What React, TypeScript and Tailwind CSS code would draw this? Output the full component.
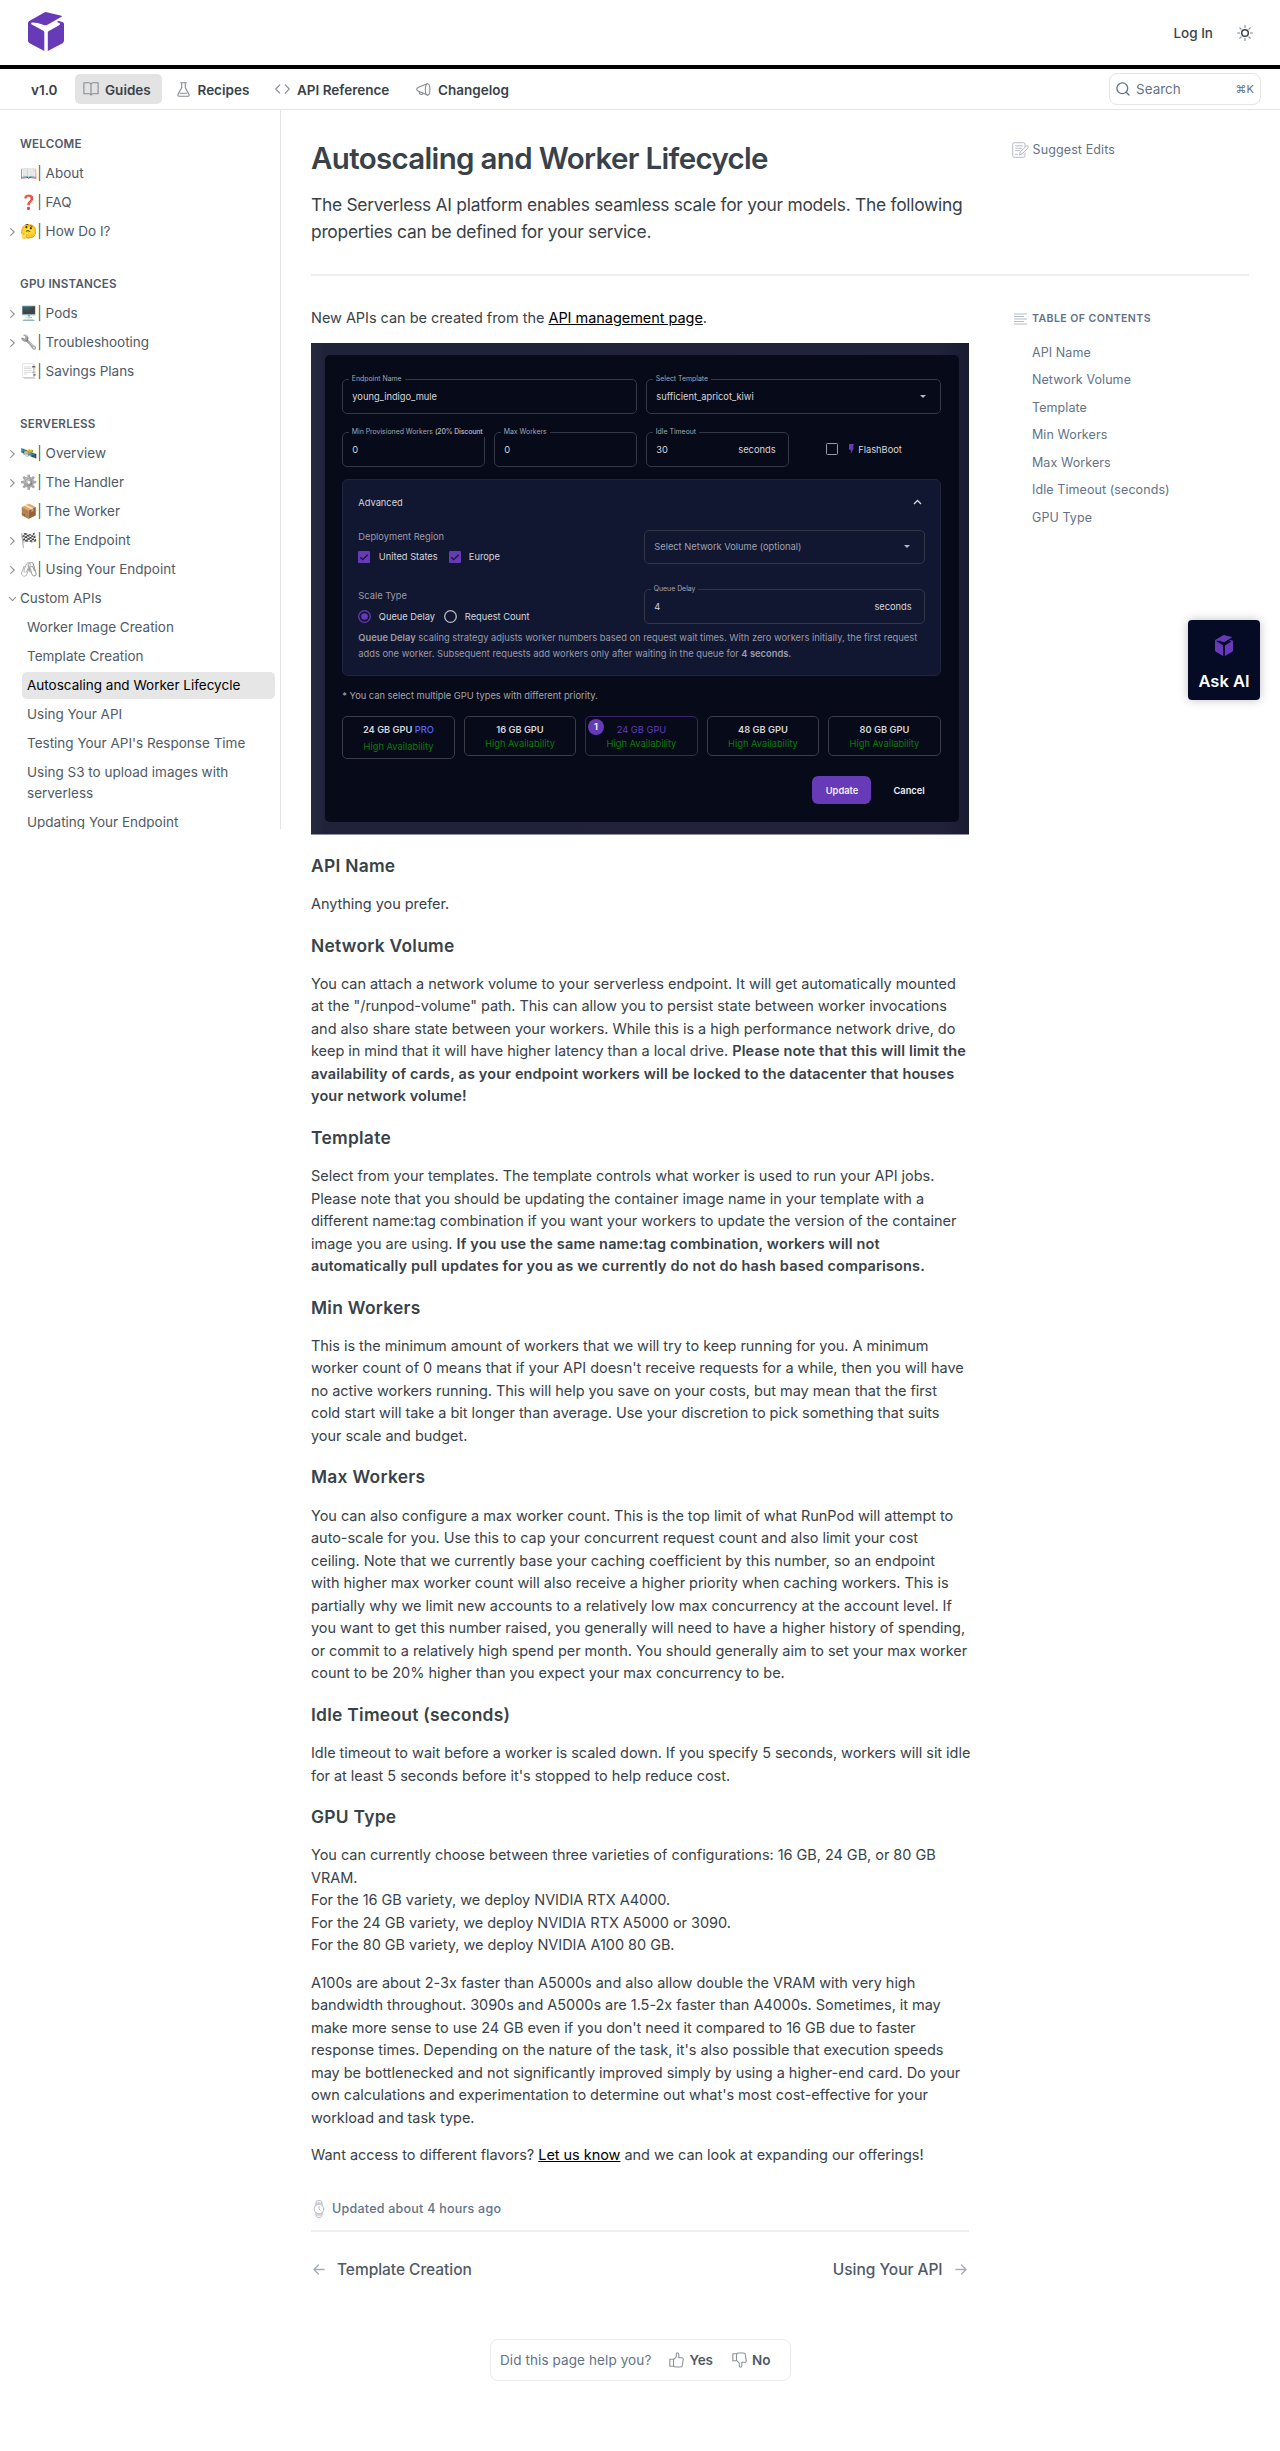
import React from "react";

function Cube({ className }: { className: string }) {
  return (
    <svg className={className} viewBox="0 0 36 39" fill="#673AB7" preserveAspectRatio="none">
      <path d="M17.6 .1 33.500 3.700Q34.500 4.200 33.600 4.800L19 13Q18 13.600 16.800 13.200L9.500 10.900 4 10.500Q2.500 10.800 3.400 12.200L15.400 18.800Q16.300 19.400 16.300 20.600V39L1.600 31.200Q0 30.400 0 28.600V11Q0 9.600 1.200 8.900L16.400.5Q17 0 17.600.1Z" />
      <path d="M29.300 9.500Q30 8.800 31 9.100L35 10.300Q36 10.800 36 12.200V28.600Q36 30.400 34.600 31.200L19.800 39V20.600Q19.800 19.500 20.800 18.900L31.200 13.200Q33 12 31.500 11L29.800 10.500Q29 10 29.300 9.500Z" />
    </svg>
  );
}

type IconProps = { className: string };
const stroke = { fill: "none", stroke: "currentColor", strokeLinecap: "round" as const, strokeLinejoin: "round" as const };

const BookIcon = ({ className }: IconProps) => (
  <svg className={className} viewBox="0 0 16 14" {...stroke} strokeWidth="1.1">
    <path d="M8 2.2Q7.4.8 5.8.8H.9v11H6Q7.6 11.8 8 13.2Q8.4 11.8 10 11.8h5.100V.8H10.200Q8.600.8 8 2.200V13" />
  </svg>
);
const FlaskIcon = ({ className }: IconProps) => (
  <svg className={className} viewBox="0 0 13 15" {...stroke} strokeWidth="1.1">
    <path d="M3.600.8h5.800M4.700.8v5L1 12.300Q.4 14.200 2.200 14.200h8.600Q12.600 14.200 12 12.300L8.300 5.800v-5M3.200 11.300h6.600" />
  </svg>
);
const CodeIcon = ({ className }: IconProps) => (
  <svg className={className} viewBox="0 0 15 10" {...stroke} strokeWidth="1.1">
    <path d="M4.800.8.8 5l4 4.200M10.200.8l4 4.200-4 4.200" />
  </svg>
);
const MegaphoneIcon = ({ className }: IconProps) => (
  <svg className={className} viewBox="0 0 15 13" {...stroke} strokeWidth="1.100">
    <path d="M11.300.8 2 4.600Q.6 5.200.7 6.300.7 7.300 2 7.900l9.300 4.200M3.300 8.500v1.400q.3 1.500 2 1.600l1.700-.6" />
    <ellipse cx="11.600" cy="6.500" rx="2.300" ry="5.700" />
  </svg>
);
const SunIcon = ({ className }: IconProps) => (
  <svg className={className} viewBox="0 0 16 16" {...stroke}>
    <circle cx="8" cy="8" r="3.300" strokeWidth="1.500" />
    <path strokeWidth="1.100" opacity=".65" d="M8 .6v2M8 13.400v2M.6 8h2M13.400 8h2M2.800 2.800l1.300 1.300M11.900 11.900l1.300 1.300M2.800 13.200l1.300-1.300M11.900 4.100l1.300-1.300" />
  </svg>
);
const SearchIcon = ({ className }: IconProps) => (
  <svg className={className} viewBox="0 0 14 14" {...stroke} strokeWidth="1.300">
    <circle cx="6.300" cy="6.300" r="5.400" />
    <path d="m10.200 10.200 2.800 2.800" />
  </svg>
);
const Chevron = ({ className }: IconProps) => (
  <svg className={className} viewBox="0 0 5 8" {...stroke} strokeWidth="1.100">
    <path d="m.7.7 3.500 3.300L.7 7.300" />
  </svg>
);
const EditIcon = ({ className }: IconProps) => (
  <svg className={className} viewBox="0 0 17 16" {...stroke} strokeWidth="1">
    <path d="M13 4.500V2.200Q13 .7 11.500.7H2.200Q.7.7.7 2.200v11.600Q.7 15.300 2.200 15.300h9.300q1.500 0 1.500-1.500V11M3.500 3.800h7M3.500 6.200h6M3.500 8.600h4M3.500 12.300h2M7.500 12.600l.8-2.800 5.900-5.600q1-.7 1.800.1t0 1.800l-5.900 5.600z" />
  </svg>
);
const TocIcon = ({ className }: IconProps) => (
  <svg className={className} viewBox="0 0 13 12" {...stroke} strokeWidth="1">
    <path d="M.5 1h12M.5 3.500h9M.5 6h12M.5 8.500h9M.5 11h12" />
  </svg>
);
const WatchIcon = ({ className }: IconProps) => (
  <svg className={className} viewBox="0 0 12 18" {...stroke} strokeWidth="1">
    <circle cx="6" cy="9" r="4.800" />
    <path d="M2.800 5.200 3.300 1.600Q3.500.7 4.400.7h3.200q.9 0 1.100.9l.5 3.600M2.800 12.800l.5 3.600q.2.900 1.100.9h3.200q.9 0 1.100-.9l.5-3.600M3.300 3h5.400M3.300 15h5.400M6 6.500V9l1.300 1.300" />
  </svg>
);
const ArrowIcon = ({ className }: IconProps) => (
  <svg className={className} viewBox="0 0 12 11" {...stroke} strokeWidth="1.300">
    <path d="M.9 5.500h10M6.600 1l4.500 4.500L6.600 10" />
  </svg>
);
const ThumbIcon = ({ className }: IconProps) => (
  <svg className={className} viewBox="0 0 15 16" {...stroke} strokeWidth="1.100">
    <path d="M4.500 7.200v7H.8v-7zM4.500 7.600 7.300 4.800V2Q7.400.7 8.300.7q1.500 0 1.500 2.100v3h2.900q1.600 0 1.500 1.500l-.8 6q-.2 1.700-1.800 1.700H7Q5.600 15 4.500 13.800" />
  </svg>
);

const nav = [
  { label: "Guides", Icon: BookIcon, icon: "h-[14px] w-4", box: "ml-[17px] w-[87px] pl-2 bg-[#e3e3e3]", gap: "ml-[6px]" },
  { label: "Recipes", Icon: FlaskIcon, icon: "h-[15px] w-[13px]", box: "w-[98px] pl-[15px]", gap: "ml-[7.500px]" },
  { label: "API Reference", Icon: CodeIcon, icon: "h-[10px] w-[15px]", box: "w-[141px] pl-[15px]", gap: "ml-[7px]" },
  { label: "Changelog", Icon: MegaphoneIcon, icon: "h-[13px] w-[15px]", box: "w-[120px] pl-[15px]", gap: "ml-[7px]" },
];

function Header() {
  return (
    <header>
      <div className="flex h-[65px] items-center justify-between pl-[28px] pr-[27px]">
        <Cube className="mb-[3px] h-[39px] w-[36px]" />
        <div className="flex items-center">
          <span className="pt-px text-[13.500px] font-medium">Log In</span>
          <SunIcon className="ml-[24px] size-4" />
        </div>
      </div>
      <div className="h-1 bg-black" />
      <nav className="flex h-[41px] items-center border-b border-[#e3e4e6] pl-[31px] pr-[19px] text-[13.500px] font-semibold">
        <span className="w-[27px] pt-[2px]">v1.0</span>
        {nav.map(({ label, Icon, icon, box, gap }) => (
          <div key={label} className={`flex h-[30px] items-center whitespace-nowrap rounded-[5px] ${box}`}>
            <Icon className={`shrink-0 text-[#858b91] ${icon}`} />
            <span className={`pt-[2px] ${gap}`}>{label}</span>
          </div>
        ))}
        <div className="ml-auto flex h-8 w-[152px] items-center rounded-lg border border-[#e4e5e7] pl-[6px] pr-[6px] text-[#637288]">
          <SearchIcon className="size-[14px]" />
          <span className="ml-[6px] font-normal">Search</span>
          <span className="ml-auto text-[11px] font-normal">⌘K</span>
        </div>
      </nav>
    </header>
  );
}

type Item = { emoji?: string; label: string; arrow?: boolean; gray?: boolean };
const sections: { title: string; items: Item[] }[] = [
  {
    title: "WELCOME",
    items: [
      { emoji: "📖", label: "About" },
      { emoji: "❓", label: "FAQ" },
      { emoji: "🤔", label: "How Do I?", arrow: true },
    ],
  },
  {
    title: "GPU INSTANCES",
    items: [
      { emoji: "🖥️", label: "Pods", arrow: true },
      { emoji: "🔧", label: "Troubleshooting", arrow: true, gray: true },
      { emoji: "📑", label: "Savings Plans", gray: true },
    ],
  },
  {
    title: "SERVERLESS",
    items: [
      { emoji: "🛰️", label: "Overview", arrow: true },
      { emoji: "⚙️", label: "The Handler", arrow: true, gray: true },
      { emoji: "📦", label: "The Worker" },
      { emoji: "🏁", label: "The Endpoint", arrow: true },
      { emoji: "🖇️", label: "Using Your Endpoint", arrow: true, gray: true },
    ],
  },
];
const custom = [
  "Worker Image Creation",
  "Template Creation",
  "Autoscaling and Worker Lifecycle",
  "Using Your API",
  "Testing Your API's Response Time",
  "Using S3 to upload images with serverless",
  "Updating Your Endpoint",
];

function Sidebar() {
  return (
    <aside className="h-[719px] w-[281px] shrink-0 overflow-hidden border-r border-[#e3e4e6] pt-[25px] text-[13.500px] leading-[21px] text-[#4f5a66]">
      {sections.map((s) => (
        <section key={s.title} className="mb-[29px] last-of-type:mb-0">
          <h2 className="mb-[6px] pl-[20px] text-[11.600px] font-semibold leading-[18px] tracking-[0.200px]">{s.title}</h2>
          {s.items.map((i) => (
            <div key={i.label} className="flex h-[29px] items-center">
              <span className="flex w-[20px] justify-end pr-[5px]">
                {i.arrow && <Chevron className="h-2 w-[5px] text-[#8b929a]" />}
              </span>
              <span className={`flex w-[17.300px] justify-center font-['Noto_Color_Emoji'] text-[14px] ${i.gray ? "grayscale" : ""}`}>{i.emoji}</span>
              <span className="whitespace-pre">| {i.label}</span>
            </div>
          ))}
        </section>
      ))}
      <div className="flex h-[29px] items-center">
        <span className="flex w-[20px] justify-end pr-[5px]">
          <Chevron className="h-2 w-[5px] rotate-90 text-[#8b929a]" />
        </span>
        Custom APIs
      </div>
      <div className="-mt-px ml-[21.500px] mr-[5px]">
        {custom.map((c) => (
          <div
            key={c}
            className={`my-[2px] rounded-[5px] py-[3px] pl-[5.500px] pr-6 ${c.startsWith("Auto") ? "bg-[#e6e6e6] text-black" : ""}`}
          >
            {c}
          </div>
        ))}
      </div>
    </aside>
  );
}

function Field({ label, value, className, suffix, select }: { label?: React.ReactNode; value: string; className: string; suffix?: string; select?: boolean }) {
  return (
    <div className={`relative flex h-[34.500px] items-center justify-between rounded-[5px] border border-[#343748] pl-[9px] pr-[12px] ${className}`}>
      {label && <span className="absolute -top-[6px] left-[5.500px] whitespace-nowrap bg-inherit px-[3px] text-[6.900px] leading-[10px] text-[#a5a6ae]">{label}</span>}
      <span>{value}</span>
      {suffix && <span>{suffix}</span>}
      {select && <span className="mr-[2px] border-x-[3.500px] border-t-[3.500px] border-x-transparent border-t-[#b9bac1]" />}
    </div>
  );
}

const Check = () => (
  <svg className="size-3" viewBox="0 0 12 12">
    <rect width="12" height="12" rx="1.300" fill="#673AB7" />
    <path d="m2.200 6.200 2.500 2.500 5-5" fill="none" stroke="#111631" strokeWidth="1.300" />
  </svg>
);
const Radio = ({ on }: { on?: boolean }) => (
  <svg className={`size-[13px] ${on ? "text-[#673AB7]" : "text-[#b9bac1]"}`} viewBox="0 0 13 13">
    <circle cx="6.500" cy="6.500" r="5.800" fill="none" stroke="currentColor" strokeWidth="1.300" />
    {on && <circle cx="6.500" cy="6.500" r="3.300" fill="currentColor" />}
  </svg>
);

const gpus = ["24 GB GPU", "16 GB GPU", "24 GB GPU", "48 GB GPU", "80 GB GPU"];

function EndpointForm() {
  return (
    <div className="flex h-[492px] w-[658px] flex-col border-b border-[#8e8f99] bg-[linear-gradient(90deg,#262b3e_0,#20223a_14px,#22233a_95%,#191b33_100%)] pb-[12px] pl-[14px] pr-[10.400px] pt-[12px] text-[9.300px] leading-[13px] tracking-normal text-[#d6d7dc]">
      <div className="flex flex-1 flex-col rounded-[5px] bg-[#070a18] pl-[17.300px] pr-[17.900px] pt-[24px]">
        <div className="flex gap-[9.700px]">
          <Field className="w-[294.300px] bg-[#070a18]" label="Endpoint Name" value="young_indigo_mule" />
          <Field className="w-[294.300px] bg-[#070a18]" label="Select Template" value="sufficient_apricot_kiwi" select />
        </div>
        <div className="mt-[18.500px] flex gap-[9.700px]">
          <Field className="w-[142.300px] bg-[#070a18]" label={<>Min Provisioned Workers <b className="font-semibold tracking-[-0.150px]">(20% Discount</b></>} value="0" />
          <Field className="w-[142.300px] bg-[#070a18]" label="Max Workers" value="0" />
          <Field className="w-[142.300px] bg-[#070a18]" label="Idle Timeout" value="30" suffix="seconds" />
          <div className="ml-[28px] flex items-center">
            <span className="size-3 rounded-[1.500px] border-[1.500px] border-[#9b9ca5]" />
            <svg className="ml-[11px] h-[10px] w-[5px]" viewBox="0 0 5 10" fill="#673AB7"><path d="M0 0h5L3.800 3.500H5L1.800 10V5.800H0z" /></svg>
            <span className="ml-[4px]">FlashBoot</span>
          </div>
        </div>
        <div className="mt-[12px] h-[197px] rounded-[6px] border border-[#20253f] bg-[#111631] pl-[15px] pr-[15px] pt-[16px]">
          <div className="flex items-center justify-between pr-[3px]">
            <span>Advanced</span>
            <svg className="h-[6px] w-[9px]" viewBox="0 0 9 6" fill="none" stroke="#d6d7dc" strokeWidth="1.300"><path d="m1 5 3.500-3.500L8 5" /></svg>
          </div>
          <div className="mt-[21px] flex">
            <div className="w-[286px]">
              <div className="text-[#9a9ca8]">Deployment Region</div>
              <div className="mt-[7.500px] flex items-center">
                <Check /><span className="ml-[8.500px] w-[70px]">United States</span>
                <Check /><span className="ml-[8px]">Europe</span>
              </div>
              <div className="mt-[25.500px] text-[#9a9ca8]">Scale Type</div>
              <div className="mt-[8px] flex items-center">
                <Radio on /><span className="ml-[7.500px] w-[65.500px]">Queue Delay</span>
                <Radio /><span className="ml-[7.500px]">Request Count</span>
              </div>
            </div>
            <div className="w-[280.500px]">
              <Field className="bg-[#111631] text-[#a0a2ad]" value="Select Network Volume (optional)" select />
              <Field className="mt-[25px] bg-[#111631]" label="Queue Delay" value="4" suffix="seconds" />
            </div>
          </div>
          <p className="mt-[6px] whitespace-nowrap text-[9.330px] leading-[16.300px] text-[#9a9ca8]">
            <b className="font-semibold">Queue Delay</b> scaling strategy adjusts worker numbers based on request wait times. With zero workers initially, the first request
            <br />
            adds one worker. Subsequent requests add workers only after waiting in the queue for <b className="font-semibold">4 seconds.</b>
          </p>
        </div>
        <p className="mt-[13.500px] text-[#a5a6ae]">* You can select multiple GPU types with different priority.</p>
        <div className="mt-[13.500px] flex items-start gap-[9.100px]">
          {gpus.map((g, i) => (
            <div
              key={i}
              className={`relative flex w-[112.400px] flex-col items-center rounded-[5px] border pt-[6px] ${i === 0 ? "h-[43px]" : "h-[40.500px]"} ${i === 2 ? "border-[#3a2568] text-[#673AB7]" : "border-[#3c3d48]"}`}
            >
              {i === 2 && (
                <span className="absolute left-[2px] top-[2.500px] flex size-[15.500px] items-center justify-center rounded-full bg-[#673AB7] font-semibold text-white">1</span>
              )}
              <span className={i === 2 ? "" : "font-semibold"}>{g}{i === 0 && <span className="font-medium text-[#5468ff]"> PRO</span>}</span>
              <span className={`text-[#087c0c] ${i === 0 ? "mt-[4px]" : "mt-[1px]"}`}>High Availability</span>
            </div>
          ))}
        </div>
        <div className="mt-[17.500px] flex items-center justify-end pr-[16px] font-semibold text-[#f0f0f3]">
          <span className="flex h-7 w-[59px] items-center justify-center rounded-[6px] bg-[#673AB7]">Update</span>
          <span className="ml-[22px]">Cancel</span>
        </div>
      </div>
    </div>
  );
}

const H = ({ children }: { children: React.ReactNode }) => (
  <h2 className="mb-[15.800px] mt-[19px] text-[17.400px] font-semibold leading-[22.500px] tracking-[0.280px]">{children}</h2>
);
const Lines = ({ lines, className = "" }: { lines: React.ReactNode[]; className?: string }) => (
  <p className={`whitespace-nowrap ${className}`}>
    {lines.map((l, i) => (
      <React.Fragment key={i}>{l}<br /></React.Fragment>
    ))}
  </p>
);
const B = ({ children }: { children: React.ReactNode }) => <b className="font-semibold tracking-[0.140px]">{children}</b>;
const A = ({ children }: { children: React.ReactNode }) => <a className="text-black underline">{children}</a>;

function Article() {
  return (
    <article className="w-[658px] text-[14.500px] leading-[22.500px] tracking-[-0.040px]">
      <p className="mb-[13.500px] pt-[31px]">New APIs can be created from the <A>API management page</A>.</p>
      <div className="pb-[0.800px]">
        <EndpointForm />
      </div>
      <H>API Name</H>
      <Lines lines={["Anything you prefer."]} />
      <H>Network Volume</H>
      <Lines
        lines={[
          "You can attach a network volume to your serverless endpoint. It will get automatically mounted",
          "at the \"/runpod-volume\" path. This can allow you to persist state between worker invocations",
          "and also share state between your workers. While this is a high performance network drive, do",
          <>keep in mind that it will have higher latency than a local drive. <B>Please note that this will limit the</B></>,
          <B>availability of cards, as your endpoint workers will be locked to the datacenter that houses</B>,
          <B>your network volume!</B>,
        ]}
      />
      <H>Template</H>
      <Lines
        lines={[
          "Select from your templates. The template controls what worker is used to run your API jobs.",
          "Please note that you should be updating the container image name in your template with a",
          "different name:tag combination if you want your workers to update the version of the container",
          <>image you are using. <B>If you use the same name:tag combination, workers will not</B></>,
          <B>automatically pull updates for you as we currently do not do hash based comparisons.</B>,
        ]}
      />
      <H>Min Workers</H>
      <Lines
        lines={[
          "This is the minimum amount of workers that we will try to keep running for you. A minimum",
          "worker count of 0 means that if your API doesn't receive requests for a while, then you will have",
          "no active workers running. This will help you save on your costs, but may mean that the first",
          "cold start will take a bit longer than average. Use your discretion to pick something that suits",
          "your scale and budget.",
        ]}
      />
      <H>Max Workers</H>
      <Lines
        lines={[
          "You can also configure a max worker count. This is the top limit of what RunPod will attempt to",
          "auto-scale for you. Use this to cap your concurrent request count and also limit your cost",
          "ceiling. Note that we currently base your caching coefficient by this number, so an endpoint",
          "with higher max worker count will also receive a higher priority when caching workers. This is",
          "partially why we limit new accounts to a relatively low max concurrency at the account level. If",
          "you want to get this number raised, you generally will need to have a higher history of spending,",
          "or commit to a relatively high spend per month. You should generally aim to set your max worker",
          "count to be 20% higher than you expect your max concurrency to be.",
        ]}
      />
      <H>Idle Timeout (seconds)</H>
      <Lines
        lines={[
          "Idle timeout to wait before a worker is scaled down. If you specify 5 seconds, workers will sit idle",
          "for at least 5 seconds before it's stopped to help reduce cost.",
        ]}
      />
      <H>GPU Type</H>
      <Lines
        lines={[
          "You can currently choose between three varieties of configurations: 16 GB, 24 GB, or 80 GB",
          "VRAM.",
          "For the 16 GB variety, we deploy NVIDIA RTX A4000.",
          "For the 24 GB variety, we deploy NVIDIA RTX A5000 or 3090.",
          "For the 80 GB variety, we deploy NVIDIA A100 80 GB.",
        ]}
      />
      <Lines
        className="mt-[15px]"
        lines={[
          "A100s are about 2-3x faster than A5000s and also allow double the VRAM with very high",
          "bandwidth throughout. 3090s and A5000s are 1.5-2x faster than A4000s. Sometimes, it may",
          "make more sense to use 24 GB even if you don't need it compared to 16 GB due to faster",
          "response times. Depending on the nature of the task, it's also possible that execution speeds",
          "may be bottlenecked and not significantly improved simply by using a higher-end card. Do your",
          "own calculations and experimentation to determine out what's most cost-effective for your",
          "workload and task type.",
        ]}
      />
      <p className="mt-[15px]">Want access to different flavors? <A>Let us know</A> and we can look at expanding our offerings!</p>
      <div className="mt-[31.700px] flex items-center border-b-2 border-[#eeeff1] pb-[11.500px] text-[12.500px] font-medium leading-[20px] tracking-[0.240px] text-[#637288]">
        <WatchIcon className="ml-[2px] h-[18px] w-3 text-[#b4bac5]" />
        <span className="ml-[7px]">Updated about 4 hours ago</span>
      </div>
      <div className="mt-[25.500px] flex items-center justify-between text-[15.500px] font-medium leading-[24px] text-[#4f5a66]">
        <span className="flex items-center"><ArrowIcon className="ml-[2px] h-[11px] w-3 rotate-180 text-[#a5acb8]" /><span className="ml-[12px]">Template Creation</span></span>
        <span className="flex items-center"><span>Using Your API</span><ArrowIcon className="ml-[12.500px] mr-[2px] h-[11px] w-3 text-[#a5acb8]" /></span>
      </div>
      <div className="mx-auto mt-[57.500px] flex h-[42px] w-[301px] items-center rounded-lg border border-[#eaebed] pl-[9.500px] text-[13.500px] text-[#637288]">
        <span className="whitespace-nowrap tracking-[0.100px]">Did this page help you?</span>
        <ThumbIcon className="ml-[18px] h-4 w-[15px] text-[#8b929a]" />
        <span className="ml-[5px] font-semibold text-[#4f5a66]">Yes</span>
        <ThumbIcon className="ml-[19px] h-4 w-[15px] -scale-y-100 text-[#8b929a]" />
        <span className="ml-[5px] font-semibold text-[#4f5a66]">No</span>
      </div>
    </article>
  );
}

const toc = ["API Name", "Network Volume", "Template", "Min Workers", "Max Workers", "Idle Timeout (seconds)", "GPU Type"];

export default function App() {
  return (
    <div className="relative h-[2451px] w-[1280px] overflow-hidden bg-white font-['Inter',sans-serif] text-[#384248]">
      <Header />
      <div className="flex">
        <Sidebar />
        <main className="ml-[30px] w-[938px]">
          <div className="flex h-[166px] justify-between border-b-2 border-[#eeeff1]">
            <div className="pt-[28px]">
              <h1 className="text-[29.500px] font-semibold leading-[40px] tracking-[-0.670px]">Autoscaling and Worker Lifecycle</h1>
              <p className="mt-[13px] whitespace-nowrap text-[17.400px] leading-[27px] tracking-[-0.270px]">
                The Serverless AI platform enables seamless scale for your models. The following
                <br />
                properties can be defined for your service.
              </p>
            </div>
            <div className="mt-[30px] flex h-5 w-[237px] items-center text-[12.500px] tracking-[0.120px] text-[#637288]">
              <EditIcon className="h-4 w-[17px] text-[#b4bac5]" />
              <span className="ml-[3.500px]">Suggest Edits</span>
            </div>
          </div>
          <div className="flex justify-between">
            <Article />
            <div className="w-[237px] pt-[32.500px] text-[12.500px] tracking-[0.080px] text-[#637288]">
              <div className="flex h-5 items-center">
                <TocIcon className="ml-[2px] h-3 w-[13px] text-[#b4bac5]" />
                <span className="ml-[5px] text-[10.600px] font-semibold tracking-[0.400px]">TABLE OF CONTENTS</span>
              </div>
              <div className="mt-[10px] pl-[20px]">
                {toc.map((t) => (
                  <div key={t} className="h-[27.550px] leading-[27.550px]">{t}</div>
                ))}
              </div>
            </div>
          </div>
        </main>
      </div>
      <div className="absolute left-[1188px] top-[620px] flex h-[80px] w-[72px] flex-col items-center rounded bg-[#050b25] pt-[15px] text-white shadow-[0_0_10px_rgba(0,0,0,0.250)]">
        <Cube className="h-[21px] w-[18px]" />
        <span className="mt-[13px] text-[16.500px] font-semibold leading-6">Ask AI</span>
      </div>
    </div>
  );
}
